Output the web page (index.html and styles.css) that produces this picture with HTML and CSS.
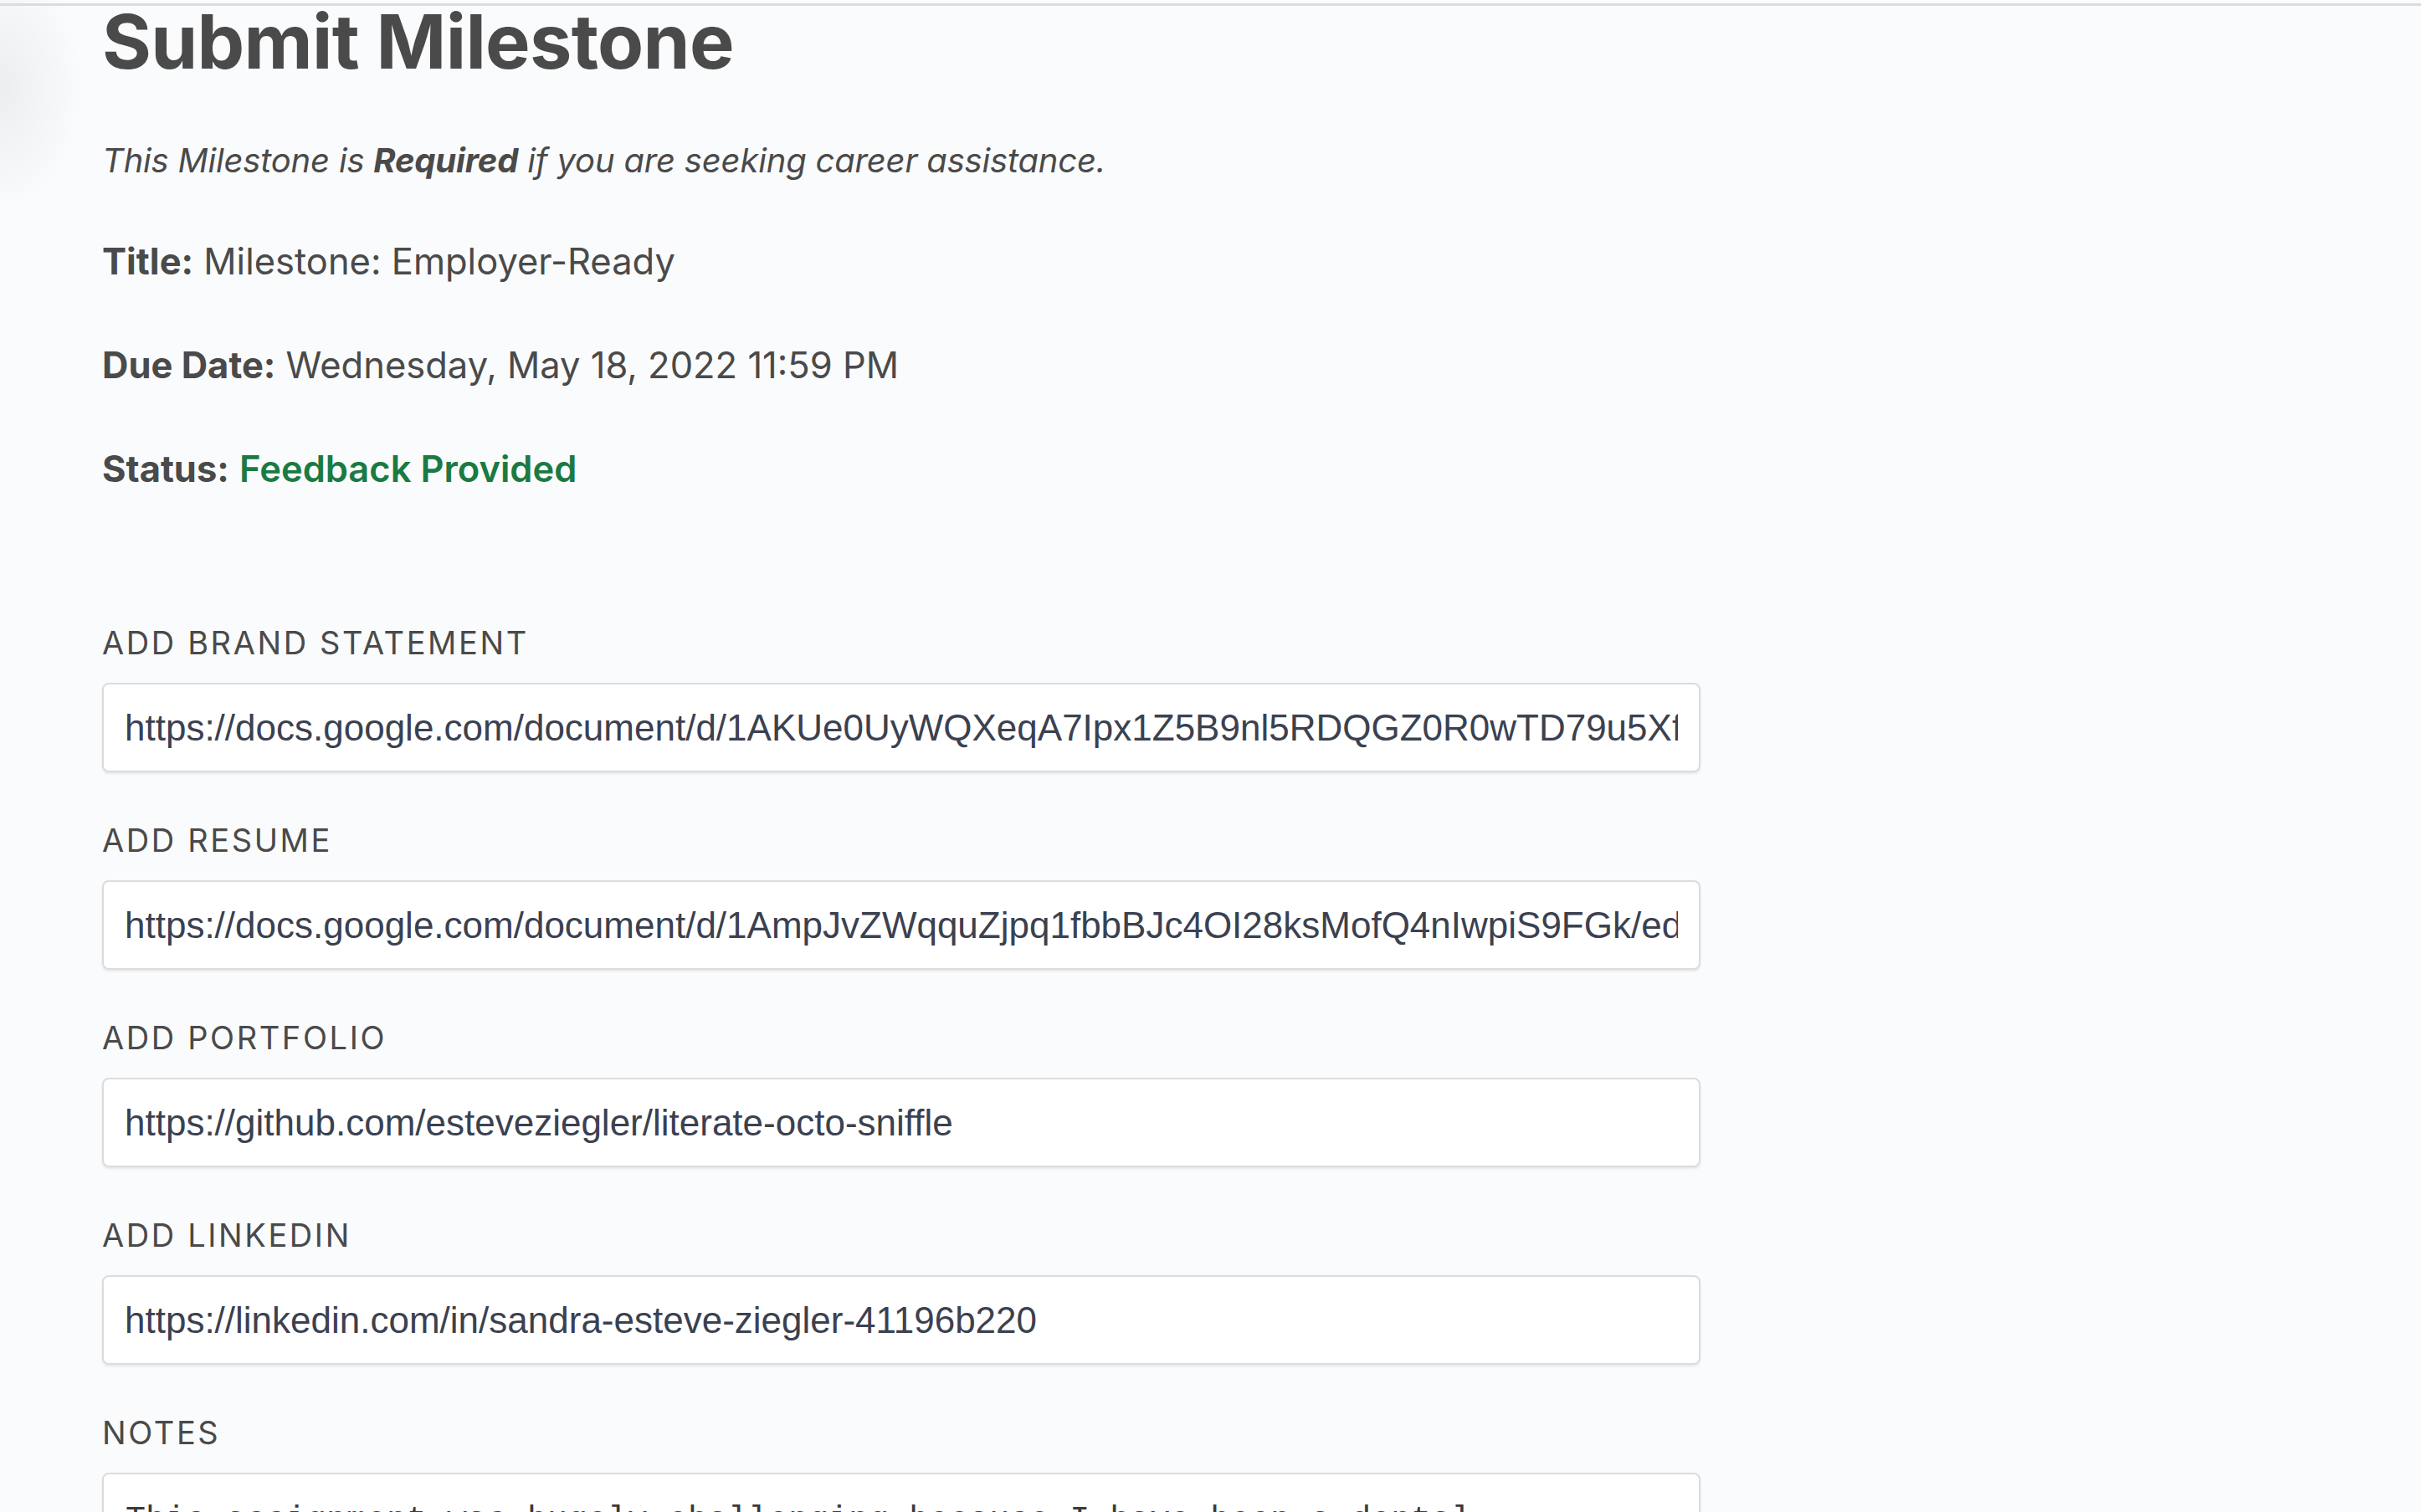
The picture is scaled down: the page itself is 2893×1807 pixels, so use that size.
FILE: index.html
```html
<!DOCTYPE html>
<html lang="en">
<head>
<meta charset="utf-8">
<title>Submit Milestone</title>
<link rel="stylesheet" href="styles.css">
</head>
<body>
<div class="topbar"></div>
<main class="content">
  <h1 class="page-title">Submit Milestone</h1>
  <p class="intro"><em>This Milestone is <strong>Required</strong> if you are seeking career assistance.</em></p>
  <p class="meta"><strong>Title:</strong> Milestone: Employer-Ready</p>
  <p class="meta"><strong>Due Date:</strong> Wednesday, May 18, 2022 11:59 PM</p>
  <p class="meta"><strong>Status:</strong> <span class="status-ok">Feedback Provided</span></p>

  <form class="milestone-form">
    <div class="field">
      <label class="field-label" for="brand">Add Brand Statement</label>
      <input class="field-input" id="brand" type="text" value="https://docs.google.com/document/d/1AKUe0UyWQXeqA7Ipx1Z5B9nl5RDQGZ0R0wTD79u5Xf/edit?usp=sharing">
    </div>
    <div class="field">
      <label class="field-label" for="resume">Add Resume</label>
      <input class="field-input" id="resume" type="text" value="https://docs.google.com/document/d/1AmpJvZWqquZjpq1fbbBJc4OI28ksMofQ4nIwpiS9FGk/edit?usp=sharing">
    </div>
    <div class="field">
      <label class="field-label" for="portfolio">Add Portfolio</label>
      <input class="field-input" id="portfolio" type="text" value="https://github.com/esteveziegler/literate-octo-sniffle">
    </div>
    <div class="field">
      <label class="field-label" for="linkedin">Add LinkedIn</label>
      <input class="field-input" id="linkedin" type="text" value="https://linkedin.com/in/sandra-esteve-ziegler-41196b220">
    </div>
    <div class="field">
      <label class="field-label" for="notes">Notes</label>
      <textarea class="field-textarea" id="notes" rows="6">This assignment was hugely challenging because I have been a dental hygienist, and writing about myself as a developer felt new to me.</textarea>
    </div>
  </form>
</main>
</body>
</html>
```
FILE: styles.css
```css
html, body {
  margin: 0;
  padding: 0;
}

body {
  background-color: #fafbfc;
  background-image: radial-gradient(ellipse 100px 150px at 0 105px, rgba(0, 0, 0, 0.055), rgba(0, 0, 0, 0));
  background-repeat: no-repeat;
  font-family: "Inter", "Roboto", "Liberation Sans", sans-serif;
  color: #4a4a4a;
  min-height: 1807px;
  overflow: hidden;
}

.topbar {
  height: 4px;
  border-bottom: 3px solid #dcdcdc;
}

.content {
  width: 1910px;
  padding-left: 122px;
}

.page-title {
  margin: 3px 0 72px;
  font-size: 90px;
  line-height: 80px;
  font-weight: 700;
  letter-spacing: -0.7px;
  color: #4a4a4a;
}

.intro,
.meta {
  margin: 0;
  line-height: 60px;
  color: #4a4a4a;
}

.intro {
  font-size: 40px;
  margin-bottom: 60px;
  letter-spacing: -0.2px;
}

.meta {
  font-size: 43.5px;
  margin-bottom: 64px;
}

.meta:last-of-type {
  margin-bottom: 0;
}

.meta strong,
.intro strong {
  font-weight: 700;
}

.status-ok {
  color: #1b7a43;
  font-weight: 600;
}

.milestone-form {
  margin-top: 155px;
  display: flex;
  flex-direction: column;
  gap: 58px;
}

.field {
  display: flex;
  flex-direction: column;
  gap: 25px;
}

.field-label {
  font-size: 38px;
  line-height: 46px;
  text-transform: uppercase;
  letter-spacing: 2.6px;
  color: #4a4a4a;
}

.field-input,
.field-textarea {
  box-sizing: border-box;
  width: 1910px;
  margin: 0;
  border: 2px solid #dcdcdc;
  border-radius: 8px;
  background: #ffffff;
  box-shadow: 0 2px 3px rgba(0, 0, 0, 0.08);
  outline: none;
}

.field-input {
  height: 107px;
  padding: 0 25px;
  font-family: "Liberation Sans", Arial, sans-serif;
  font-size: 44px;
  color: #3b4150;
}

.field-textarea {
  height: 320px;
  padding: 26px 26px;
  font-family: "Liberation Mono", "DejaVu Sans Mono", monospace;
  font-size: 40px;
  line-height: 1.5;
  color: #3a3a3a;
  resize: vertical;
}
```
